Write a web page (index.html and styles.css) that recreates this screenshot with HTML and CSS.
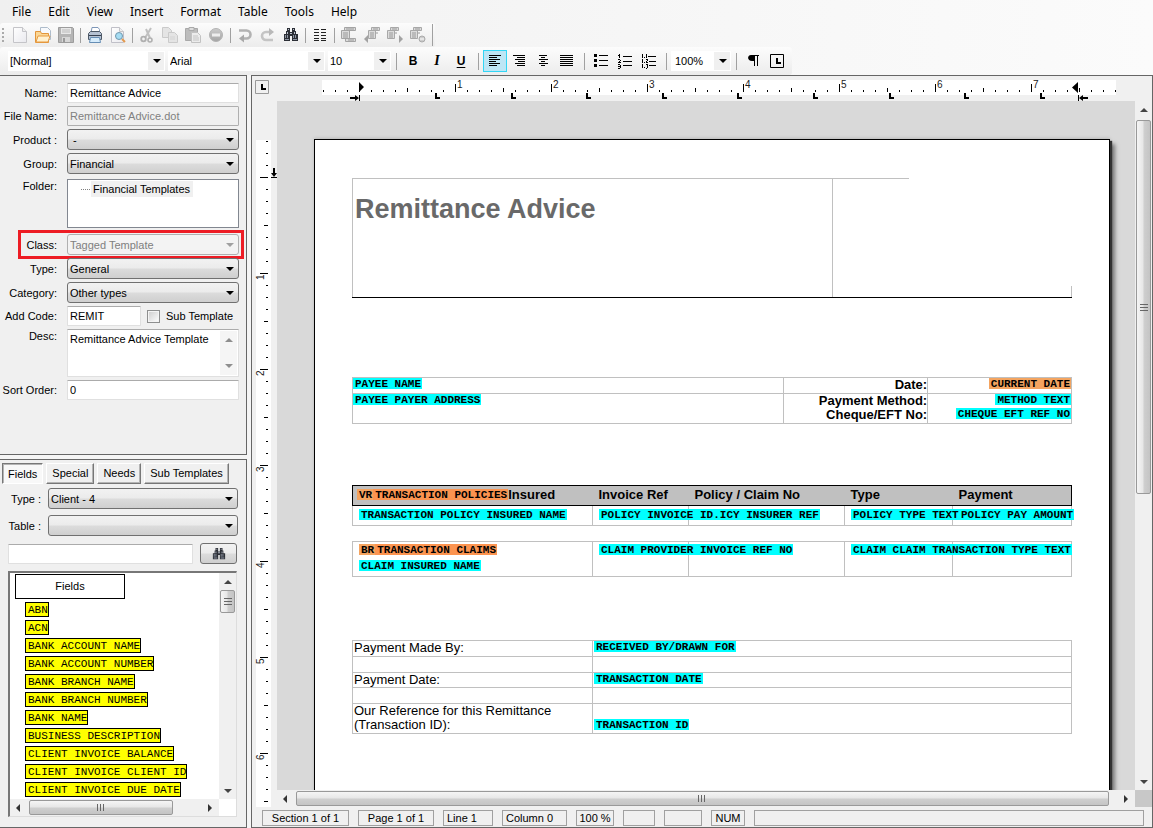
FILE: index.html
```html
<!DOCTYPE html>
<html lang="en">
<head>
<meta charset="utf-8">
<meta name="viewport" content="width=device-width, initial-scale=1">
<title>Remittance Advice</title>
<link rel="stylesheet" href="styles.css">
</head>
<body>
<svg class="defs" aria-hidden="true">
  <defs>
    <linearGradient id="paper" x1="0" y1="0" x2="1" y2="1"><stop offset="0" stop-color="#fff"/><stop offset="1" stop-color="#e9e9ee"/></linearGradient>
    <linearGradient id="grey" x1="0" y1="0" x2="0" y2="1"><stop offset="0" stop-color="#ccc"/><stop offset="1" stop-color="#a4a4a4"/></linearGradient>
    <symbol id="binoculars" viewBox="0 0 16 16">
      <path d="M4 1h3v3H4zM9 1h3v3H9zM3 4h4v3H3zM9 4h4v3H9zM1 7h6v7H1zM9 7h6v7H9zM6 5h4v4H6z" fill="#2c2f36"/>
      <path d="M5 2h1v1H5zM10 2h1v1h-1zM4 5h1v2H4zM11 5h1v2h-1zM7 6h2v1H7z" fill="#b9c0cc"/>
      <path d="M2 8h1v3H2zM4 8h1v3H4zM10 8h1v3h-1zM12 8h1v3h-1zM2 12h4v1H2zM10 12h4v1h-4z" fill="#8d95a3"/>
    </symbol>
    <g id="blocks">
      <path d="M3.500.500h8v3h-8zM.500 3.500h7v8h-7z" fill="#dcdcdc" stroke="#a8a8a8"/>
      <path d="M5 2h5M2 6h4M2 8h4M2 10h4M8 6h2" stroke="#999" fill="none"/>
    </g>
    <pattern id="ticks-h" x="82" width="96" height="16" patternUnits="userSpaceOnUse">
      <path d="M0 8h1v8H0zM12 14h1v2h-1zM24 14h1v2h-1zM36 14h1v2h-1zM48 12h1v4h-1zM60 14h1v2h-1zM72 14h1v2h-1zM84 14h1v2h-1z" fill="#000"/>
    </pattern>
    <pattern id="ticks-v" y="76" width="16" height="96" patternUnits="userSpaceOnUse">
      <path d="M8 0v1h8V0zM14 12v1h2v-1zM14 24v1h2v-1zM14 36v1h2v-1zM12 48v1h4v-1zM14 60v1h2v-1zM14 72v1h2v-1zM14 84v1h2v-1z" fill="#000"/>
    </pattern>
  </defs>
</svg>

<nav class="menubar">
  <button>File</button><button>Edit</button><button>View</button><button>Insert</button><button>Format</button><button>Table</button><button>Tools</button><button>Help</button>
</nav>

<div class="toolbar main-tools" role="toolbar" aria-label="Standard">
  <span class="grip"></span>
  <button aria-label="New"><svg viewBox="0 0 16 16"><path d="M1.500.500h9l4 4v11h-13z" fill="url(#paper)" stroke="#c4c4c8"/><path d="M10.500.500v4h4" fill="#eee" stroke="#c4c4c8"/></svg></button>
  <button aria-label="Open"><svg viewBox="0 0 16 16"><path d="M5.500.500h7l3 3v9h-10z" fill="#f7f9fc" stroke="#aebccb"/><path d="M.500 15.500v-11h5l1 2h7v9z" fill="#fbd795" stroke="#e2953a"/><path d="M1 15l2-6h12l-2 6z" fill="#fff1cf" stroke="#e79b42"/></svg></button>
  <button aria-label="Save"><svg viewBox="0 0 16 16"><path d="M.500.500h14l1 1v14H.500z" fill="#b5b5b5" stroke="#9c9c9c"/><path d="M3 1h10v6H3z" fill="#e8e8e8"/><path d="M4 3h8M4 5h8" stroke="#bbb"/><path d="M4 10h8v5H4z" fill="#d7d7d7"/><path d="M5 11h2v4H5z" fill="#999"/></svg></button>
  <span class="sep"></span>
  <button aria-label="Print"><svg viewBox="0 0 16 16"><path d="M4 6L5 .500h6l1.500 2V6" fill="#fff" stroke="#7e97b8"/><path d="M1.500 6.500l2-2h9l2 2v6h-13z" fill="#b4c1d2" stroke="#4d5866"/><path d="M2 8.500h12" stroke="#354050"/><path d="M3.500 10.500h9l1 5h-11z" fill="#d6ecfc" stroke="#668eb5"/></svg></button>
  <button aria-label="Print preview"><svg viewBox="0 0 16 16"><path d="M1.500.500h8l4 4v11h-12z" fill="url(#paper)" stroke="#c0c0c8"/><path d="M9.500.500v4h4" fill="#eee" stroke="#c4c4c8"/><circle cx="9" cy="9" r="3.500" fill="#a5dcf3" stroke="#7097ad"/><path d="M12 12l3 3" stroke="#e49a4e" stroke-width="2"/></svg></button>
  <span class="sep"></span>
  <button aria-label="Cut"><svg viewBox="0 0 16 16" fill="none" stroke="#b0b0b0"><path d="M12 1L6 11M7 2l4 9" stroke-width="2" stroke="#c0c0c0"/><circle cx="4.500" cy="12" r="2.300" stroke-width="1.800"/><circle cx="11" cy="13" r="2" stroke-width="1.600"/></svg></button>
  <button aria-label="Copy"><svg viewBox="0 0 16 16" fill="#e4e4e4" stroke="#cacaca"><path d="M.500.500h6l3 3v7h-9z"/><path d="M6.500 5.500h6l3 3v7h-9z"/><path d="M8 10h5M8 12h5" stroke="#d4d4d4"/></svg></button>
  <button aria-label="Paste"><svg viewBox="0 0 16 16"><path d="M.500 1.500h12v12H.500z" fill="#bcbcbc" stroke="#a9a9a9"/><path d="M4 .500h5v3H4z" fill="#ddd" stroke="#aaa"/><path d="M6.500 5.500h6l3 3v7h-9z" fill="#ececec" stroke="#c2c2c2"/><path d="M8 9h5M8 11h6M8 13h6" stroke="#c4c4c4"/></svg></button>
  <button aria-label="Delete"><svg viewBox="0 0 16 16"><circle cx="8" cy="8" r="6.500" fill="url(#grey)" stroke="#b4b4b4"/><path d="M4 6.500h8v3H4z" fill="#eee"/></svg></button>
  <span class="sep"></span>
  <button aria-label="Undo"><svg viewBox="0 0 16 16"><path d="M2 3.500h7.500a3.500 3.500 0 010 8H6" fill="none" stroke="#b2b2b2" stroke-width="2.600"/><path d="M7 7.500v8l-5-4z" fill="#a9a9a9"/></svg></button>
  <button aria-label="Redo"><svg viewBox="0 0 16 16"><path d="M13 13H6a4 4 0 010-8h5" fill="none" stroke="#c4c4c4" stroke-width="2.600"/><path d="M9 1v8l5-4z" fill="#b9b9b9"/></svg></button>
  <button aria-label="Find"><svg><use href="#binoculars"/></svg></button>
  <span class="sep"></span>
  <button aria-label="Columns"><svg viewBox="0 0 16 16" fill="none" stroke="#222"><path d="M2 2.500h5M2 5.500h5M2 8.500h5M2 11.500h5M2 13.500h5M9 2.500h5M9 5.500h5M9 8.500h5M9 11.500h5M9 13.500h5"/></svg></button>
  <span class="sep"></span>
  <button aria-label="Header and footer"><svg viewBox="0 0 16 16" fill="#dcdcdc" stroke="#a4a4a4"><path d="M3.500.500h11v3h-11zM4.500 11.500h10v3h-10zM.500 3.500h8v8h-8z"/><path d="M2 6h5M2 8h5M2 10h5M5 2h8M7 13h6" stroke="#999"/></svg></button>
  <button aria-label="Previous"><svg viewBox="0 0 16 16"><use href="#blocks" x="4"/><path d="M4 8v8l-4-4z" fill="#a2a2a2"/></svg></button>
  <button aria-label="Next"><svg viewBox="0 0 16 16"><use href="#blocks"/><path d="M12 8v8l4-4z" fill="#a2a2a2"/></svg></button>
  <button aria-label="Remove"><svg viewBox="0 0 16 16"><use href="#blocks"/><circle cx="12" cy="12" r="3" fill="#ccc" stroke="#aaa"/><path d="M10 12h4" stroke="#fff"/></svg></button>
  <span class="sep end"></span>
</div>

<div class="toolbar format-tools" role="toolbar" aria-label="Formatting">
  <span class="flat wide"><select aria-label="Style"><option>[Normal]</option></select></span>
  <span class="flat wide"><select aria-label="Font"><option>Arial</option></select></span>
  <span class="flat size"><select aria-label="Font size"><option>10</option></select></span>
  <span class="sep"></span>
  <button class="glyph bold">B</button>
  <button class="glyph italic">I</button>
  <button class="glyph underline">U</button>
  <span class="sep"></span>
  <button class="active" aria-label="Align left"><svg viewBox="0 0 16 16" fill="none" stroke="#000"><path d="M2 2.500h12M2 4.500h8M2 6.500h11M2 8.500h7M2 10.500h11M2 12.500h8"/></svg></button>
  <button aria-label="Align right"><svg viewBox="0 0 16 16" fill="none" stroke="#000"><path d="M2 2.500h12M6 4.500h8M4 6.500h10M7 8.500h7M4 10.500h10M6 12.500h8"/></svg></button>
  <button aria-label="Centre"><svg viewBox="0 0 16 16" fill="none" stroke="#000"><path d="M4 2.500h8M6 4.500h4M4 6.500h9M6 8.500h4M4 10.500h9M6 12.500h4"/></svg></button>
  <button aria-label="Justify"><svg viewBox="0 0 16 16" fill="none" stroke="#000"><path d="M1 2.500h13M1 4.500h13M1 6.500h13M1 8.500h13M1 10.500h13M1 12.500h13"/></svg></button>
  <span class="sep"></span>
  <button aria-label="Bullets"><svg viewBox="0 0 16 16"><path d="M1 1h3v3H1zM1 6h3v3H1zM1 11h3v3H1zM6 2h9v1H6zM6 7h9v1H6zM6 12h9v1H6z"/></svg></button>
  <button aria-label="Numbering"><svg viewBox="0 0 16 16"><path d="M6 3h9v1H6zM6 8h9v1H6zM6 12h9v1H6zM2 1h1v4H2zM1 2h1v1H1zM1 6h2v1H1zM3 7h1v1H3zM2 8h1v1H2zM1 9h3v1H1zM1 11h2v1H1zM3 12h1v3H3zM1 13h2v1H1zM1 15h2v1H1z"/></svg></button>
  <button aria-label="Multilevel list"><svg viewBox="0 0 16 16"><path d="M1 1h1v4H1zM3 4h1v1H3zM5 1h1v4H5zM7 3h8v1H7zM1 6h1v4H1zM3 9h1v1H3zM5 6h2v1H5zM6 7h1v1H6zM5 8h1v1H5zM5 9h2v1H5zM8 8h7v1H8zM1 11h1v4H1zM3 14h1v1H3zM5 11h2v1H5zM6 12h1v3H6zM5 15h1v1H5zM8 12h7v1H8z"/></svg></button>
  <span class="sep"></span>
  <span class="flat zoom"><select aria-label="Zoom"><option>100%</option></select></span>
  <span class="sep"></span>
  <button aria-label="Show marks"><svg viewBox="0 0 16 16"><path d="M6 2h8v1h-1v10h-1V3h-2v10H9V8H7C2 8 2 2 6 2z"/></svg></button>
  <button aria-label="Tab type"><svg viewBox="0 0 16 16"><path d="M1.500 1.500h13v13h-13z" fill="none" stroke="#000"/><path d="M7 5h2v4h3v2H7z"/></svg></button>
</div>

<main class="workspace">
  <aside class="sidebar">
    <form class="panel props">
      <div class="row"><label for="name">Name:</label><input id="name" class="field" type="text" value="Remittance Advice"></div>
      <div class="row"><label for="file">File Name:</label><input id="file" class="field" type="text" value="Remittance Advice.dot" disabled></div>
      <div class="row"><label for="product">Product :</label><span class="combo"><select id="product"><option>&nbsp;-</option></select></span></div>
      <div class="row"><label for="group">Group:</label><span class="combo"><select id="group"><option>Financial</option></select></span></div>
      <div class="row top folder-row"><span class="label">Folder:</span><ul class="tree"><li>Financial Templates</li></ul></div>
      <div class="row marked"><label for="class">Class:</label><span class="combo off"><select id="class" disabled><option>Tagged Template</option></select></span></div>
      <div class="row"><label for="type">Type:</label><span class="combo"><select id="type"><option>General</option></select></span></div>
      <div class="row"><label for="category">Category:</label><span class="combo"><select id="category"><option>Other types</option></select></span></div>
      <div class="row"><label for="code">Add Code:</label><span class="split"><input id="code" class="field" type="text" value="REMIT"><label class="check"><input type="checkbox">Sub Template</label></span></div>
      <div class="row top"><label for="desc">Desc:</label><span class="memo"><textarea id="desc">Remittance Advice Template</textarea><span class="memo-bar"><i class="up"></i><i class="down"></i></span></span></div>
      <div class="row"><label for="sort">Sort Order:</label><input id="sort" class="field" type="text" value="0"></div>
    </form>

    <section class="panel picker">
      <div class="tabs">
        <button class="current">Fields</button><button>Special</button><button>Needs</button><button>Sub Templates</button>
      </div>
      <div class="picker-row"><label for="ftype">Type :</label><span class="combo"><select id="ftype"><option>Client - 4</option></select></span></div>
      <div class="picker-row"><label for="ftable">Table :</label><span class="combo"><select id="ftable"><option></option></select></span></div>
      <div class="search"><input class="field" type="text" aria-label="Search fields"><button aria-label="Find field"><svg><use href="#binoculars"/></svg></button></div>
      <div class="list">
        <div class="list-body">
          <h2>Fields</h2>
          <ul>
            <li>ABN</li><li>ACN</li><li>BANK ACCOUNT NAME</li><li>BANK ACCOUNT NUMBER</li><li>BANK BRANCH NAME</li><li>BANK BRANCH NUMBER</li><li>BANK NAME</li><li>BUSINESS DESCRIPTION</li><li>CLIENT INVOICE BALANCE</li><li>CLIENT INVOICE CLIENT ID</li><li>CLIENT INVOICE DUE DATE</li>
          </ul>
        </div>
        <div class="bar-v"><i class="up"></i><span class="thumb list-v"></span><span class="rest"></span><i class="down"></i></div>
        <div class="bar-h"><i class="left"></i><span class="thumb list-h"></span><span class="rest"></span><i class="right"></i></div>
      </div>
    </section>
  </aside>

  <section class="editor">
    <div class="corner"><svg viewBox="0 0 14 14"><path d="M.500.500h13v13H.500z" fill="#f0f0f0" stroke="#999"/><path d="M6 4h2v4h3v2H6z"/></svg></div>
    <svg class="ruler-h">
      <rect x="45" y="4" width="794" height="15" fill="#fff"/>
      <rect x="45" width="794" height="16" fill="url(#ticks-h)"/>
      <g class="ruler-num"><text x="180" y="12">1</text><text x="276" y="12">2</text><text x="372" y="12">3</text><text x="468" y="12">4</text><text x="564" y="12">5</text><text x="660" y="12">6</text><text x="756" y="12">7</text></g>
      <path d="M158 17h2v4h3v2h-5zM234 17h2v4h3v2h-5zM309 17h2v4h3v2h-5zM385 17h2v4h3v2h-5zM460 17h2v4h3v2h-5zM536 17h2v4h3v2h-5zM612 17h2v4h3v2h-5zM687 17h2v4h3v2h-5zM763 17h2v4h3v2h-5z"/>
      <path d="M82 6l5 5h-5zM82 11h5l-5 5zM801 6v11l-6-5.500z"/>
      <path d="M73 21h5v-2l4 3-4 3v-2h-5zM82 19h1v6h-1zM801 19h1v6h-1zM811 21h-5v-2l-4 3 4 3v-2h5z"/>
    </svg>
    <svg class="ruler-v">
      <rect x="4" y="39" width="15" height="100%" fill="#fff"/>
      <rect y="39" width="16" height="100%" fill="url(#ticks-v)"/>
      <g class="ruler-num"><text transform="translate(12 179) rotate(-90)">1</text><text transform="translate(12 275) rotate(-90)">2</text><text transform="translate(12 371) rotate(-90)">3</text><text transform="translate(12 467) rotate(-90)">4</text><text transform="translate(12 563) rotate(-90)">5</text><text transform="translate(12 659) rotate(-90)">6</text></g>
      <path d="M21 67h2v5h2l-3 4-3-4h2zM19 76h6v1h-6z"/>
    </svg>

    <div class="canvas">
      <article class="sheet">
        <div class="masthead"><h1>Remittance Advice</h1><div class="masthead-side"></div></div>

        <table class="payee">
          <colgroup><col class="c60"><col class="c20"><col></colgroup>
          <tr class="h16"><td><span class="tag">PAYEE NAME</span></td><th>Date:</th><td class="r"><span class="tag sand">CURRENT DATE</span></td></tr>
          <tr class="h30"><td><span class="tag">PAYEE PAYER ADDRESS</span></td><th>Payment Method:<br>Cheque/EFT No:</th><td class="r"><span class="tag">METHOD TEXT</span><br><span class="tag">CHEQUE EFT REF NO</span></td></tr>
        </table>

        <table class="lines">
          <colgroup><col class="l1"><col class="l2"><col class="l3"><col class="l4"><col></colgroup>
          <tr class="head"><th><span class="tag sand">VR</span><span class="tag orange">TRANSACTION POLICIES</span>Insured</th><th>Invoice Ref</th><th>Policy / Claim No</th><th>Type</th><th>Payment</th></tr>
          <tr class="h20"><td><span class="tag">TRANSACTION POLICY INSURED NAME</span></td><td><span class="tag">POLICY INVOICE ID.ICY INSURER REF</span></td><td></td><td><span class="tag">POLICY TYPE TEXT</span></td><td><span class="tag">POLICY PAY AMOUNT</span></td></tr>
          <tr class="gap"><td colspan="5"></td></tr>
          <tr class="h35"><td><span class="tag sand">BR</span><span class="tag orange">TRANSACTION CLAIMS</span><br><span class="tag">CLAIM INSURED NAME</span></td><td><span class="tag">CLAIM PROVIDER INVOICE REF NO</span></td><td></td><td><span class="tag">CLAIM CLAIM TRANSACTION TYPE TEXT</span></td><td></td></tr>
        </table>

        <table class="totals">
          <colgroup><col class="l1"><col></colgroup>
          <tr class="h16"><td>Payment Made By:</td><td><span class="tag">RECEIVED BY/DRAWN FOR</span></td></tr>
          <tr class="h16"><td></td><td></td></tr>
          <tr class="h15"><td>Payment Date:</td><td><span class="tag">TRANSACTION DATE</span></td></tr>
          <tr class="h16"><td></td><td></td></tr>
          <tr class="h30"><td>Our Reference for this Remittance (Transaction ID):</td><td class="low"><span class="tag">TRANSACTION ID</span></td></tr>
        </table>
      </article>
    </div>
    <div class="bar-v doc-v"><i class="up"></i><span class="thumb"></span><span class="rest"></span><i class="down"></i></div>
    <div class="bar-h doc-h"><i class="left"></i><span class="thumb"></span><span class="rest"></span><i class="right"></i></div>
    <div class="elbow"></div>

    <footer class="status">
      <span class="w87 mid">Section 1 of 1</span><span class="w76 mid">Page 1 of 1</span><span class="w50">Line 1</span><span class="w65">Column 0</span><span class="w38 mid">100 %</span><span class="w32"></span><span class="w38"></span><span class="w34 mid">NUM</span><span class="fill"></span>
    </footer>
  </section>
</main>
</body>
</html>
```

FILE: styles.css
```css
* { box-sizing: border-box; }

body {
  margin: 0;
  height: 100vh;
  display: flex;
  flex-direction: column;
  overflow: hidden;
  background: linear-gradient(90deg, #f0f0f0, #fbfbfb);
  font: 11px/14px "Liberation Sans", Arial, sans-serif;
  color: #000;
}

button, input, select, textarea { font: inherit; color: inherit; margin: 0; border-radius: 0; }
button { padding: 0; border: 0; background: none; }
select { appearance: none; border: 0; background: none; outline: 0; width: 100%; height: 100%; padding: 0 18px 0 2px; }
ul { list-style: none; margin: 0; padding: 0; }
.defs { position: absolute; width: 0; height: 0; }

/* Menu */
.menubar { flex: none; height: 23px; display: flex; align-items: center; gap: 1px; padding-left: 4px; font: 12px/16px "Noto Sans", "Open Sans", sans-serif; }
.menubar button { padding: 0 8px; }

/* Toolbars */
.toolbar { flex: none; align-self: flex-start; display: flex; align-items: center; background: linear-gradient(#fcfcfc, #ececec); border-radius: 3px; }
.toolbar button { flex: none; display: flex; align-items: center; justify-content: center; }
.toolbar svg { width: 16px; height: 16px; display: block; }
.sep { flex: none; align-self: center; height: 17px; background: linear-gradient(#a0a0a0, #a0a0a0) center / 1px 100% no-repeat; }
.main-tools { height: 24px; padding-left: 2px; }
.main-tools button { width: 23px; height: 22px; }
.main-tools .sep { width: 6px; height: 15px; }
.main-tools .end { height: 22px; }
.grip { width: 6px; height: 14px; background: radial-gradient(circle at 1px 1px, #aaa 1px, transparent 1px) 0 0 / 6px 4px; }
.format-tools { height: 28px; padding: 0 3px 0 8px; }
.format-tools button { width: 24px; height: 22px; }
.format-tools .sep { width: 10px; }
.format-tools .active { background: #bde6f5; border: 1px solid #33d6f5; }
.glyph { font-size: 12px; font-weight: bold; }
.italic { font-family: "Liberation Serif", serif; font-size: 14px; font-style: italic; }
.underline { text-decoration: underline; text-underline-offset: 2px; }

.flat { position: relative; height: 20px; background: #fff; margin-right: 3px; }
.flat::after, .combo::after { content: ""; position: absolute; top: 50%; right: 4px; margin-top: -2px; border: 4px solid transparent; border-top-color: #000; border-bottom: 0; pointer-events: none; }
.flat::before { content: ""; position: absolute; right: 1px; top: 1px; bottom: 1px; width: 16px; background: #f0f0f0; }
.flat select { position: relative; }
.wide { width: 157px; }
.size { width: 63px; margin-right: 0; }
.zoom { width: 60px; margin-right: 0; }
.flat.zoom select { padding-left: 4px; }

/* Workspace */
.workspace { flex: 1; min-height: 0; display: flex; gap: 4px; background: #f5f5f5; }
.sidebar { flex: none; width: 247px; display: flex; flex-direction: column; gap: 4px; }
.panel { background: #f0f0f0; border: 1px solid #666; border-left: 0; }

.props { flex: none; height: 380px; padding: 7px 7px 0 0; display: flex; flex-direction: column; gap: 3px; }
.row { display: grid; grid-template-columns: 57px 1fr; column-gap: 10px; align-items: center; min-height: 20px; }
.row > label, .row > .label { text-align: right; white-space: nowrap; }
.top { align-items: start; }
.folder-row { margin: 2px 0 3px; }
.field { width: 100%; height: 20px; padding: 0 2px; border: 1px solid #e0e0e0; border-top-color: #ababab; border-radius: 1px; background: #fff; outline: 0; }
.field:disabled { background: #f0f0f0; border-color: #afafaf; color: #808080; }
.combo { position: relative; display: block; height: 21px; border: 1px solid #707070; border-radius: 3px; background: linear-gradient(#f2f2f2, #ebebeb 49%, #dcdcdc 51%, #cfcfcf); }
.off { border-color: #b0b0b0; background: #f3f3f3; }
.off select { color: #808080; opacity: 1; }
.off::after { border-top-color: #a0a0a0; }
.tree { height: 49px; padding: 1px 0 0 13px; background: #fff; border: 1px solid #828790; }
.tree li { display: flex; align-items: center; width: max-content; gap: 3px; padding-right: 3px; line-height: 16px; background: linear-gradient(90deg, #fff 10px, #f0f0f0 10px); }
.tree li::before { content: ""; width: 9px; border-top: 1px dotted #808080; }
.marked { position: relative; }
.marked::after { content: ""; position: absolute; inset: -4px -5px -4px 18px; border: 3px solid #ed1c24; pointer-events: none; }
.split { display: grid; grid-template-columns: 74px 1fr; column-gap: 6px; align-items: center; }
.check { display: flex; align-items: center; gap: 6px; white-space: nowrap; }
.check input { appearance: none; width: 13px; height: 13px; border: 1px solid #8e8f8f; background: linear-gradient(135deg, #ccc, #fff); box-shadow: inset 0 0 0 1px #f4f4f4; }
.memo { display: flex; height: 48px; background: #fff; border: 1px solid #e0e0e0; border-top-color: #ababab; }
.memo textarea { flex: 1; min-width: 0; border: 0; padding: 2px; resize: none; outline: 0; background: none; overflow: hidden; white-space: nowrap; }
.memo-bar { flex: none; width: 17px; background: #f0f0f0; margin: 1px; display: flex; flex-direction: column; justify-content: space-between; align-items: center; padding: 7px 0; opacity: .6; }

.up, .down { border: 4px solid transparent; width: 0; height: 0; }
.up { border-bottom-color: #444; border-top: 0; }
.down { border-top-color: #444; border-bottom: 0; }
.left, .right { border: 4px solid transparent; width: 0; height: 0; }
.left { border-right-color: #333; border-left: 0; }
.right { border-left-color: #333; border-right: 0; }

/* Field picker */
.picker { flex: 1; min-height: 0; padding: 3px 8px 10px 0; display: flex; flex-direction: column; }
.tabs { display: flex; gap: 3px; padding-left: 2px; margin-bottom: 4px; }
.tabs button { height: 21px; padding: 0 5px 1px; border: 1px solid; border-color: #fff #777 #777 #fff; box-shadow: inset -1px -1px #b4b4b4; background: #f0f0f0; white-space: nowrap; }
.tabs .current { padding: 0 5px; border-color: #777 #fff #fff #777; background: #f8f8f8; box-shadow: inset 1px 1px #b4b4b4; }
.picker-row { display: grid; grid-template-columns: 41px 1fr; column-gap: 7px; align-items: center; margin-bottom: 6px; }
.picker-row label { text-align: right; }
.search { display: flex; gap: 7px; align-items: center; padding: 1px 1px 0 8px; }
.search .field { flex: 1; }
.search button { flex: none; width: 37px; height: 21px; display: grid; place-items: center; border: 1px solid #707070; border-radius: 3px; background: linear-gradient(#f2f2f2, #ebebeb 49%, #dcdcdc 51%, #cfcfcf); }
.search svg { width: 14px; height: 14px; }
.list { flex: 1; min-height: 0; margin: 7px 1px 0 8px; border: 1px solid #ddd; border-top: 2px solid #777; border-left: 2px solid #777; background: #fff; display: grid; grid-template: minmax(0, 1fr) 17px / minmax(0, 1fr) 17px; }
.list-body { overflow: hidden; padding: 1px 0 0 5px; }
.list h2 { width: 110px; margin: 0 0 3px; border: 1px solid #000; font: 11px/23px "Liberation Sans", Arial, sans-serif; text-align: center; }
.list ul { padding-left: 10px; display: flex; flex-direction: column; align-items: flex-start; gap: 3px; }
.list li { height: 15px; padding: 0 0 0 2px; border: 1px solid #000; background: #ff0; font: 11px/14px "Liberation Mono", "Courier New", monospace; white-space: nowrap; }

/* Scroll bars */
.bar-v, .bar-h { display: flex; align-items: center; background: #f0f0f0; }
.bar-v { flex-direction: column; padding: 7px 0 6px; }
.bar-h { padding: 0 7px 0 6px; }
.thumb { border: 1px solid #999; border-radius: 2px; display: grid; place-items: center; }
.bar-v .thumb { width: 15px; background: linear-gradient(90deg, #f5f5f5, #e6e6e6 48%, #cfcfcf 52%, #c4c4c4); margin-top: 8px; }
.bar-h .thumb { height: 15px; background: linear-gradient(#f5f5f5, #e6e6e6 48%, #cfcfcf 52%, #c4c4c4); margin-left: 9px; }
.thumb::after { content: ""; width: 8px; height: 7px; }
.bar-v .thumb::after { background: repeating-linear-gradient(#666 0 1px, transparent 1px 3px); }
.bar-h .thumb::after { background: repeating-linear-gradient(90deg, #666 0 1px, transparent 1px 3px); }
.rest { flex: 1; }
.bar-v .list-v { flex: none; height: 23px; margin-top: 6px; }
.list-h { flex: 4; }
.doc-v .thumb { flex: 366; }
.doc-v .rest { flex: 281; }
.doc-h .thumb { flex: 54; }

/* Editor */
.editor { flex: 1; min-width: 0; border: 1px solid #666; background: #f0f0f0; display: grid; grid-template: 25px minmax(0, 1fr) 17px 20px / 25px minmax(0, 1fr) 17px; }
.corner { padding: 4px 0 0 3px; }
.corner svg { width: 14px; height: 14px; display: block; }
.ruler-h { grid-column: 2 / 4; width: 100%; height: 25px; }
.ruler-v { grid-row: 2 / 4; grid-column: 1; width: 25px; height: 100%; min-height: 0; }
.ruler-num { font: 10px "Liberation Sans", Arial, sans-serif; fill: #222; }
.canvas { grid-area: 2 / 2; overflow: hidden; background: #d9d9d9; padding: 38px 25px 0 37px; }
.doc-v { grid-area: 2 / 3; }
.doc-h { grid-area: 3 / 2; }
.elbow { grid-area: 3 / 3; background: #c8c8c8; }
.status { grid-area: 4 / 1 / 5 / 4; display: flex; gap: 9px; padding: 3px 8px 1px 10px; }
.status span { flex: none; border: 1px solid #a0a0a0; padding-left: 3px; white-space: nowrap; }
.status .mid { padding-left: 0; text-align: center; }
.status .fill { flex: 1; }
.w87 { width: 87px; } .w76 { width: 76px; } .w65 { width: 65px; } .w50 { width: 50px; }
.w38 { width: 38px; } .w34 { width: 34px; } .w32 { width: 32px; }

/* Document */
.sheet { min-height: 1056px; padding: 38px 37px; background: #fff; border: 1px solid #000; box-shadow: 2px 2px 1px #333, 5px 5px 4px #777, 0 -1px 3px #bbb; font-size: 13px; line-height: 14px; }
.masthead { height: 120px; display: flex; border-bottom: 1px solid #000; margin-bottom: 79px; }
.masthead h1 { flex: 2; margin: 0; padding: 13px 0 0 2px; border: 1px solid #c0c0c0; border-bottom: 0; font-size: 27px; line-height: 34px; color: #696969; white-space: nowrap; }
.masthead-side { flex: 1; background: linear-gradient(#c0c0c0, #c0c0c0) 0 0 / 32% 1px no-repeat, linear-gradient(#c0c0c0, #c0c0c0) 100% 100% / 1px 11px no-repeat; }
.sheet table { width: 100%; table-layout: fixed; border-collapse: collapse; }
.sheet td, .sheet th { padding: 0; border: 1px solid #c0c0c0; vertical-align: top; text-align: left; }
.tag { display: inline-block; height: 11px; padding: 0 1px 0 2px; background: #0ff; font: bold 11px/12px "Liberation Mono", "Courier New", monospace; white-space: nowrap; vertical-align: top; }
.sand { background: #f4a460; }
.orange { background: #fc9450; }
.h15 { height: 15px; }
.h16 { height: 16px; }
.h20 { height: 20px; }
.h30 { height: 30px; }
.h35 { height: 35px; }
.c60 { width: 60%; }
.c20 { width: 20%; }
.l1 { width: 240px; }
.l2 { width: 96px; }
.l3 { width: 156px; }
.l4 { width: 108px; }
.payee { margin-bottom: 61px; }
.payee th { text-align: right; }
.sheet .r { text-align: right; }
.lines { margin-bottom: 63px; line-height: 16px; }
.sheet .head th { height: 20px; padding: 1px 0 0 6px; background: #c0c0c0; border: 1px solid #000; border-width: 1px 0; white-space: nowrap; }
.sheet .head th:first-child { padding-left: 4px; border-left-width: 1px; }
.sheet .head th:last-child { border-right-width: 1px; }
.head .tag { margin-top: 2px; }
.sheet .lines td { padding: 3px 0 0 6px; white-space: nowrap; }
.sheet .h35 td { padding-top: 2px; }
.sheet .gap td { height: 16px; padding: 0; border-left: 0; border-right: 0; }
.sheet .totals td { padding-left: 1px; }
.sheet .low { vertical-align: bottom; }
```
